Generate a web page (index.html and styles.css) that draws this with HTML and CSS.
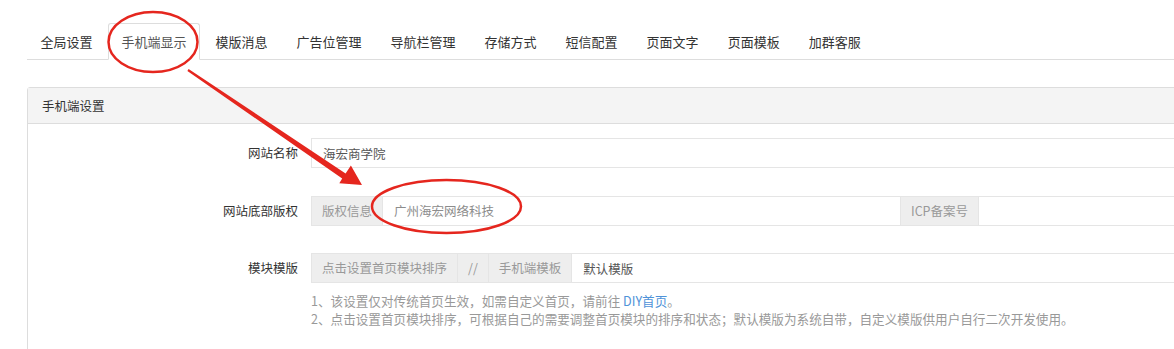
FILE: index.html
```html
<!DOCTYPE html>
<html lang="zh-CN">
<head>
<meta charset="utf-8">
<title>手机端显示</title>
<link rel="stylesheet" href="styles.css">
</head>
<body>
<div class="page">
  <ul class="tabs">
    <li class="tab">全局设置</li>
    <li class="tab active">手机端显示</li>
    <li class="tab">模版消息</li>
    <li class="tab">广告位管理</li>
    <li class="tab">导航栏管理</li>
    <li class="tab">存储方式</li>
    <li class="tab">短信配置</li>
    <li class="tab">页面文字</li>
    <li class="tab">页面模板</li>
    <li class="tab">加群客服</li>
  </ul>

  <div class="panel">
    <div class="panel-head">手机端设置</div>
    <div class="panel-body">
      <div class="form-row">
        <label class="label">网站名称</label>
        <div class="control">
          <div class="group">
            <input class="input" type="text" value="海宏商学院">
          </div>
        </div>
      </div>
      <div class="form-row">
        <label class="label">网站底部版权</label>
        <div class="control">
          <div class="group">
            <span class="addon">版权信息</span>
            <input class="input" type="text" placeholder="广州海宏网络科技">
            <span class="addon">ICP备案号</span>
            <input class="input" type="text">
          </div>
        </div>
      </div>
      <div class="form-row">
        <label class="label">模块模版</label>
        <div class="control">
          <div class="group">
            <span class="addon">点击设置首页模块排序</span>
            <span class="addon">//</span>
            <span class="addon">手机端模板</span>
            <input class="input" type="text" value="默认模版">
          </div>
          <div class="help">
            <p>1、该设置仅对传统首页生效，如需自定义首页，请前往 <a class="link" href="#">DIY首页</a>。</p>
            <p>2、点击设置首页模块排序，可根据自己的需要调整首页模块的排序和状态；默认模版为系统自带，自定义模版供用户自行二次开发使用。</p>
          </div>
        </div>
      </div>
    </div>
  </div>

  <svg class="annot" width="1174" height="349" viewBox="0 0 1174 349" xmlns="http://www.w3.org/2000/svg">
    <ellipse cx="153" cy="42" rx="44.5" ry="30" fill="none" stroke="#e5261e" stroke-width="2.5"/>
    <ellipse cx="446.5" cy="206.5" rx="74.5" ry="26.5" fill="none" stroke="#e5261e" stroke-width="2.5"/>
    <polygon points="188.6,69 345.6,173.5 350.9,165.4 362,185 339.3,183.3 342.2,178.5 187.4,71" fill="#e5261e"/>
  </svg>
</div>
</body>
</html>
```

FILE: styles.css
```css
html, body {
  margin: 0;
  padding: 0;
  overflow: hidden;
  background: #fff;
}

body {
  font-family: "Noto Sans CJK SC", sans-serif;
  font-size: 12.5px;
  color: #333;
}

.page {
  position: relative;
  width: 1500px;
  padding: 23px 0 0 27px;
}

.tabs {
  display: flex;
  margin: 0;
  padding: 0;
  list-style: none;
  border-bottom: 1px solid #ddd;
}

.tab {
  margin: 0 2px -1px 0;
  padding: 0 12.5px;
  font-size: 13px;
  line-height: 35px;
  border: 1px solid transparent;
  border-radius: 3px 3px 0 0;
  color: #333;
  white-space: nowrap;
}

.tab.active {
  border-color: #ddd #ddd transparent;
  background: #fff;
  color: #555;
}

.panel {
  margin-top: 27px;
  border: 1px solid #ddd;
  border-radius: 3px;
  height: 300px;
}

.panel-head {
  padding: 0 14px;
  line-height: 35px;
  background: #f4f4f4;
  border-bottom: 1px solid #ddd;
  color: #333;
}

.panel-body {
  display: flex;
  flex-direction: column;
  gap: 27.5px;
  padding: 14px 15px;
}

.form-row {
  display: flex;
  align-items: flex-start;
  gap: 13px;
}

.label {
  flex: none;
  width: 255px;
  text-align: right;
  line-height: 30px;
  color: #333;
}

.control {
  flex: none;
  width: 1186px;
}

.group {
  display: flex;
  height: 30px;
}

.addon {
  flex: none;
  padding: 0 10px;
  line-height: 28px;
  background: #eee;
  border: 1px solid #e5e5e5;
  color: #999;
  white-space: nowrap;
}

.addon + .addon,
.addon + .input,
.input + .addon {
  margin-left: -1px;
}

.input {
  flex: 1 1 0;
  min-width: 0;
  box-sizing: border-box;
  height: 30px;
  margin: 0;
  padding: 0 11px;
  border: 1px solid #e5e5e5;
  border-radius: 0;
  outline: none;
  font-family: "Noto Sans CJK SC", sans-serif;
  font-size: 12.5px;
  color: #555;
  background: #fff;
}

.input::placeholder {
  color: #8c8c8c;
  opacity: 1;
}

.help {
  margin-top: 9px;
  color: #999;
  font-size: 12.6px;
  line-height: 18px;
}

.help p {
  margin: 0;
}

.link {
  color: #4f93d8;
  text-decoration: none;
}

.annot {
  position: absolute;
  top: 0;
  left: 0;
  pointer-events: none;
}
```
